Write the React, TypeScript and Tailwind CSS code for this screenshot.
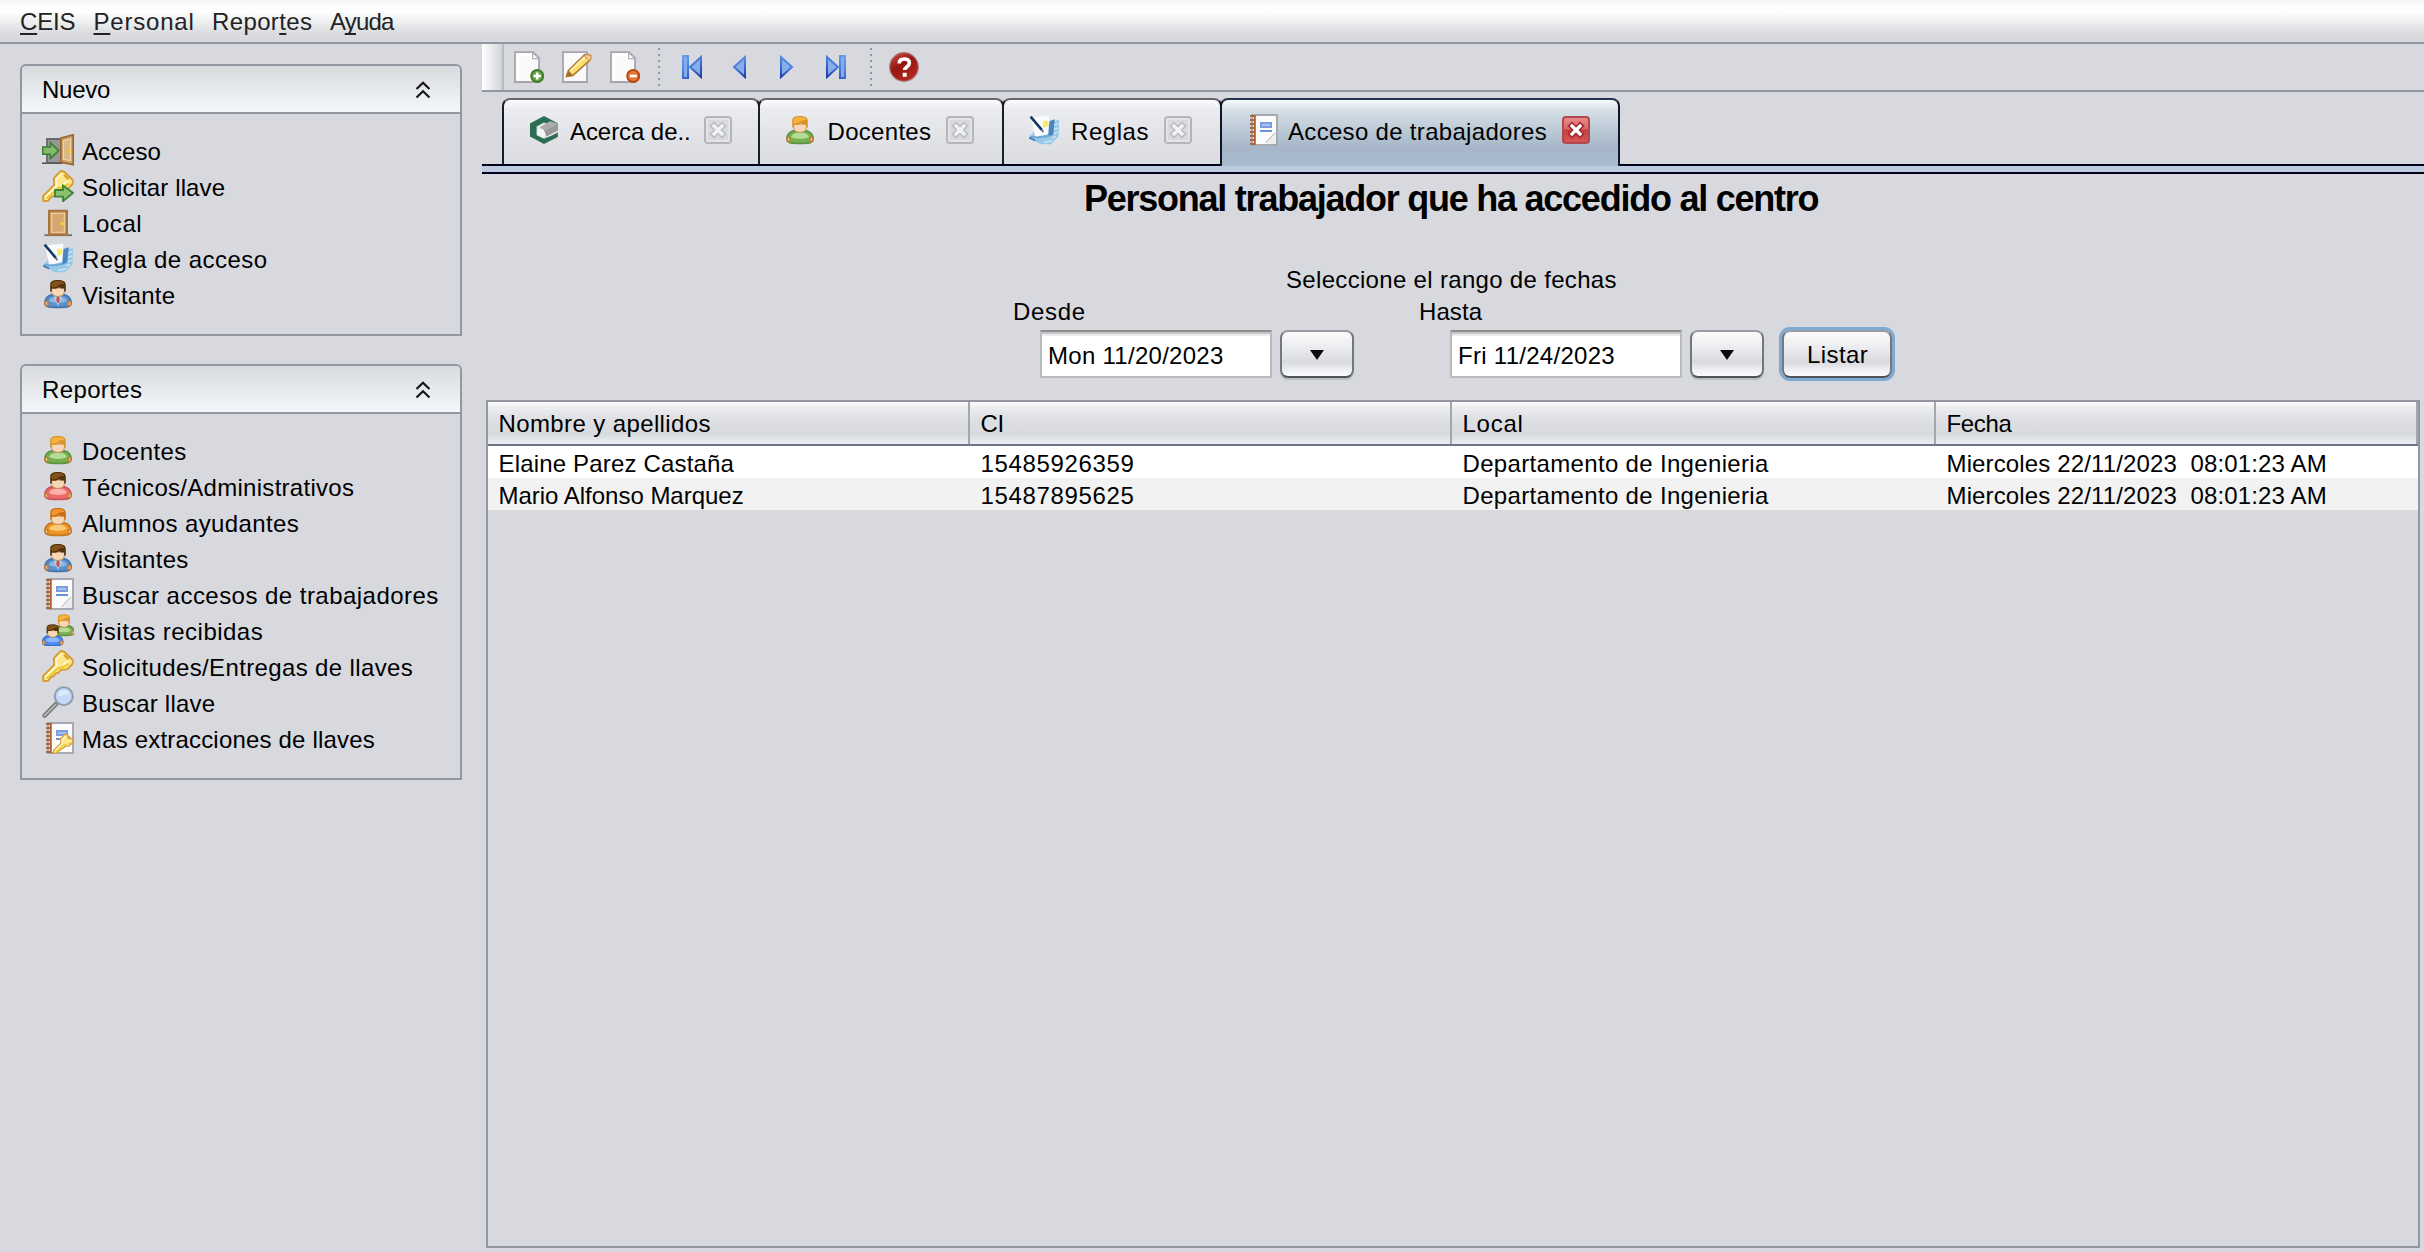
import { useLayoutEffect, useRef, type ReactNode } from 'react';

/* Label whose tracking is adjusted so that its glyphs span exactly `w` pixels. */
function T({ w, children, className = '' }: { w: number; children: ReactNode; className?: string }) {
  const ref = useRef<HTMLSpanElement>(null);
  useLayoutEffect(() => {
    const el = ref.current;
    if (!el) return;
    const ctx = document.createElement('canvas').getContext('2d');
    if (!ctx) return;
    const cs = getComputedStyle(el);
    ctx.font = `${cs.fontWeight} ${cs.fontSize} "Liberation Sans"`;
    const text = el.textContent ?? '';
    const m = ctx.measureText(text);
    const ink = m.actualBoundingBoxLeft + m.actualBoundingBoxRight;
    el.style.letterSpacing = `${(w - ink) / Math.max(1, text.length - 1)}px`;
    el.style.textIndent = `${m.actualBoundingBoxLeft}px`;
    el.style.width = `${w}px`;
  }, [w]);
  return (
    <span ref={ref} className={`block shrink-0 whitespace-pre ${className}`}>
      {children}
    </span>
  );
}

function U({ children }: { children: ReactNode }) {
  return (
    <span className="underline decoration-2 underline-offset-[3px] [text-decoration-skip-ink:none]">{children}</span>
  );
}

function Icon({ children, className = '' }: { children: ReactNode; className?: string }) {
  return (
    <svg viewBox="0 0 16 16" className={`block size-8 shrink-0 ${className}`} fill="none">
      {children}
    </svg>
  );
}

type Tone = 'green' | 'red' | 'orange' | 'blue' | 'azure';
const tones: Record<Tone, { edge: string; a: string; b: string }> = {
  green: { edge: '#5c9440', a: '#b4dc94', b: '#74b050' },
  red: { edge: '#cc5058', a: '#fcb0ac', b: '#ec6c6c' },
  orange: { edge: '#c87820', a: '#fcc870', b: '#ec9428' },
  blue: { edge: '#4474ac', a: '#8cb8e4', b: '#5c90cc' },
  azure: { edge: '#3c70c8', a: '#8cb8fc', b: '#4c8cf4' },
};
const hairs = {
  blond: ['#f4b440', '#dc9428'],
  brown: ['#84501c', '#54300c'],
  ginger: ['#f09430', '#d06c10'],
};

function Figure({ tone, hair }: { tone: Tone; hair: keyof typeof hairs }) {
  const t = tones[tone];
  const h = hairs[hair];
  return (
    <>
      <path d="M1.500 12.600c0-2.600 1.600-3.900 3.700-4.300l2.800.9 2.800-.9c2.100.4 3.700 1.700 3.700 4.300 0 .9-.4 1.300-1.200 1.600-1.500.6-9.100.6-10.600 0-.8-.3-1.200-.7-1.200-1.600z" fill={t.b} stroke={t.edge} strokeWidth=".9" />
      <path d="M3.500 11.500c.8-1.700 2.200-2.300 4.500-2.100 2.300-.2 3.700.4 4.500 2.100-2.500 1.300-6.500 1.300-9 0z" fill={t.a} />
      <path d="M1.400 11.800h1.500v2.200l-1.100-.3zM14.600 11.800h-1.500v2.200l1.100-.3z" fill="#f4c48c" stroke="#c47c34" strokeWidth=".6" />
      {tone === 'blue' && (
        <>
          <path d="M6.300 8.800 8 10.200l1.700-1.400v1.600L8 14l-1.700-3.500z" fill="#b4d0ec" />
          <path d="m8 9 .9 1.200L8.600 12 8 12.700 7.400 12l-.3-1.800z" fill="#d44840" />
        </>
      )}
      <path d="M4.800 5h6.400v1.700c0 1.600-1.400 2.500-3.200 2.500S4.800 8.300 4.800 6.700z" fill="#f8d8b4" stroke="#c08c5c" strokeWidth=".5" />
      <path d="M4.100 6.800V3.200C4.100 1.700 5.500 1 8 1s3.900.8 3.900 2.400v3.400h-.8V5.100c-1 .3-1.900.1-2.500-.5C7.500 5.300 6.200 5.500 4.900 5.200v1.600z" fill={h[1]} />
      <path d="M4.700 4.500V3c.3-1.100 1.400-1.500 3.300-1.500s3 .5 3.200 1.500c-1.600.2-2.400 0-3 .8-.9.800-2 .9-3.500.7z" fill={h[0]} />
    </>
  );
}

const Person = ({ tone, hair }: { tone: Tone; hair: keyof typeof hairs }) => (
  <Icon>
    <Figure tone={tone} hair={hair} />
  </Icon>
);

const PeopleIcon = () => (
  <Icon>
    <g transform="translate(4.700 -.6) scale(.78)">
      <Figure tone="green" hair="blond" />
    </g>
    <g transform="translate(-.9 4.400) scale(.78)">
      <Figure tone="azure" hair="brown" />
    </g>
  </Icon>
);

const DoorInIcon = () => (
  <Icon>
    <path d="M2.500 2.500H10v12H2.500z" fill="#989898" stroke="#686868" strokeWidth=".9" />
    <path d="M0 14.600h9" stroke="#585858" strokeWidth=".8" />
    <path d="M9.400 2 15.600.4v15L9.400 14z" fill="#cc9c64" stroke="#986430" strokeWidth=".8" />
    <path d="M10.700 3.300 14.300 2.400v11l-3.600-.8z" fill="#dcb884" stroke="#ecd4ac" strokeWidth=".6" />
    <path d="M13.200 8h1.500v1.500h-1.500z" fill="#fccc34" />
    <path d="M.3 6.500h3.900V4.300L8.300 8.300l-4.100 4v-2.200H.3z" fill="#84bc6c" stroke="#3c7c34" strokeWidth=".8" />
  </Icon>
);

const keyBody = (
  <>
    <path d="M5.900 4.200 9 .8q1-.6 2 .1l4.300 4q.5 1-.3 2.500l-2.500 2.300-3 .2L8 11.500l-1.500.3L6 13l-1.400.4L3 15.400l-2.400.1V13l5.500-5.500z" fill="#fce888" stroke="#d89c34" strokeWidth=".95" strokeLinejoin="round" />
    <path d="M9.700 2 7.100 4.800l.3 2.900-5.600 5.600M10.300 7.400l3-2.200" stroke="#fffad0" strokeWidth=".8" />
    <path d="m2.400 14.300 5.700-5.200 2.600-.6 2.600-1.600" stroke="#ecc838" strokeWidth="1" />
    <path d="m11 2.500 2.300 2.100" stroke="#d89c34" strokeWidth="1" />
  </>
);
const KeyIcon = () => <Icon>{keyBody}</Icon>;
const KeyGoIcon = () => (
  <Icon>
    {keyBody}
    <path d="M6.500 10h4V7.800l5 3.700-5 4.100v-2.300h-4z" fill="#8cc070" stroke="#3c8434" strokeWidth=".9" />
  </Icon>
);

const DoorIcon = () => (
  <Icon>
    <path d="M1.200 14.600h13.800" stroke="#707070" strokeWidth=".9" />
    <path d="M3.500 2.400h9v12h-9z" fill="#c89458" stroke="#a87440" />
    <path d="M4.800 3.700h6.400v9.500H4.800z" fill="#d4a870" stroke="#e8cca0" strokeWidth=".7" />
    <path d="M9.300 8h1.700v1.600H9.300z" fill="#fccc34" />
  </Icon>
);

const RulesIcon = () => (
  <Icon>
    <path d="m.6 12 3-4 7-3.500 5-1.800-.4 8.500-3.800 4-5.200-.2z" fill="#98c8e8" />
    <path d="m10.800 3.500 2.600-.9-.8 7.800-2.600 1z" fill="#4c84bc" />
    <path d="m13.200 5.500 2-.8M13 7.700l2-.8M12.800 9.900l2-.8M12 12l2-.8M8 14.200l4-.8" stroke="#d0e8f8" strokeWidth=".7" />
    <path d="M1.500 1.800 10.700.8l-.6 9.200-6.500 1.600z" fill="#f8fafc" />
    <path d="m1 11.200 3.500.6 6-.8" stroke="#70a8d4" strokeWidth="1" />
    <path d="M7.500 3.400h2.600V6L7.500 7z" fill="#f8ec60" />
    <path d="m1.300 1.300 5.600 6.600" stroke="#143868" strokeWidth="1.300" />
    <path d="m6.900 7.900.7 1.200" stroke="#5c6c80" strokeWidth=".9" />
    <path d="m.6 11.900 3 1.400" stroke="#3474ac" strokeWidth=".8" />
  </Icon>
);

const notebookBody = (
  <>
    <path d="M3 .5h12.500v15H3z" fill="#fcfcfc" stroke="#a8a8b0" />
    <path d="M4.400.5v15" stroke="#b45c2c" strokeWidth="1" />
    <path d="M2 1h2M2 3h2M2 5h2M2 7h2M2 9h2M2 11h2M2 13h2M2 15h2" stroke="#a8683c" strokeWidth=".9" />
    <path d="M7.500 4.500h5v2h-5z" fill="#a8c0f0" stroke="#7c9ce0" />
    <path d="M7 8.500h6" stroke="#6c90dc" />
  </>
);
const NotebookIcon = () => (
  <Icon>
    {notebookBody}
    <path d="M10 15c2-.8 1.800-2 1.900-2.800 1.300 0 2.400-.7 3.100-2.700V15z" fill="#ececee" />
    <path d="m9.800 14.500 4.700-5" stroke="#c8c8cc" strokeWidth=".7" />
  </Icon>
);
const NotebookKeyIcon = () => (
  <Icon>
    {notebookBody}
    <g transform="translate(5.500 5.800) scale(.64)">{keyBody}</g>
  </Icon>
);

const MagnifierIcon = () => (
  <Icon>
    <path d="m1.300 14.800 5.900-6" stroke="#787878" strokeWidth="2.200" strokeLinecap="round" />
    <path d="m1.300 14.800 5.600-5.600" stroke="#b8b8b8" strokeWidth=".8" strokeLinecap="round" />
    <circle cx="10.900" cy="5.100" r="4.500" fill="#c4daf8" stroke="#8e9cb0" strokeWidth="1" />
    <path d="M8 5.200a3 3 0 0 1 5.700-1.300z" fill="#dceafa" />
  </Icon>
);

const sheet = (
  <>
    <path d="M1.500.6h9l3 3v11.900h-12z" fill="#fafafa" stroke="#a4a6ac" strokeWidth=".9" />
    <path d="M3 14V2h6.500" stroke="#fff" />
    <path d="M10.300.8v3h3z" fill="#fff" stroke="#b0b2b8" strokeWidth=".6" />
  </>
);
const AddIcon = () => (
  <Icon>
    {sheet}
    <circle cx="12.600" cy="12.500" r="3" fill="#68a848" stroke="#447c2c" />
    <path d="M12.600 10.700v3.600M10.800 12.500h3.600" stroke="#fff" strokeWidth="1.200" />
  </Icon>
);
const EditIcon = () => (
  <Icon>
    <path d="M1.500.6h12v14.900h-12z" fill="#fafafa" stroke="#a4a6ac" strokeWidth=".9" />
    <path d="M12.400 1.800 4.200 9.700l-1 3 3.300-.5L15 4.600V2.300z" fill="#fcdc6c" stroke="#b08038" strokeWidth=".8" />
    <path d="m5.300 9.800 7.500-7.200" stroke="#fff4b0" />
    <path d="m12 2.300 2.600 2.600.9-1V2.100L13 1.800z" fill="#f8c898" stroke="#c08040" strokeWidth=".5" />
    <path d="m4.300 9.800-1.300 3 3.500-.6z" fill="#a86c30" />
  </Icon>
);
const RemoveIcon = () => (
  <Icon>
    {sheet}
    <circle cx="12.600" cy="12.500" r="3" fill="#ec7434" stroke="#b44c14" />
    <path d="M10.900 12.500h3.500" stroke="#fff" strokeWidth="1.300" />
  </Icon>
);

function NavIcon({ bar, flip = false, className }: { bar: boolean; flip?: boolean; className: string }) {
  const w = bar ? 20 : 14;
  const id = `nav${w}${flip ? 'f' : ''}`;
  const tri = bar ? 'M19 2v20L8 12z' : 'M13 2v20L2 12z';
  return (
    <svg viewBox={`0 0 ${w} 24`} fill="none" className={`block h-6 shrink-0 ${className}`}>
      <defs>
        <linearGradient id={id} gradientUnits="userSpaceOnUse" x1="0" y1="0" x2={w} y2="24">
          <stop offset="0" stopColor="#6ca4f0" />
          <stop offset=".5" stopColor="#4478d8" />
          <stop offset="1" stopColor="#1830a8" />
        </linearGradient>
      </defs>
      <g transform={flip ? `translate(${w} 0) scale(-1 1)` : undefined} stroke={`url(#${id})`} strokeWidth="2">
        {bar && <path d="M1 1h5v22H1z" fill="#84acec" />}
        <path d={tri} fill="#88aee8" />
      </g>
    </svg>
  );
}

const HelpIcon = ({ className }: { className: string }) => (
  <svg viewBox="0 0 32 32" className={`block size-8 shrink-0 ${className}`}>
    <defs>
      <linearGradient id="help" x1="0" y1="0" x2="0.600" y2="1">
        <stop offset="0" stopColor="#d05048" />
        <stop offset=".5" stopColor="#941810" />
        <stop offset="1" stopColor="#b42820" />
      </linearGradient>
    </defs>
    <circle cx="16" cy="16" r="14.300" fill="url(#help)" stroke="#b07878" strokeWidth="1.200" />
    <path d="M11.200 12.500c0-3 2-4.500 5-4.500 3.100 0 5.200 1.500 5.200 4.100 0 3.700-4.700 3.500-4.700 7" fill="none" stroke="#fff" strokeWidth="3.600" />
    <path d="M14.700 21.800h4v4h-4z" fill="#fff" />
  </svg>
);

const HexIcon = () => (
  <Icon>
    <path d="M8 1 15 4.800l-2.400 1.500L8 4.300 4.300 6.300v4.300L8 12.400l4-1.700 2.900-1.500v2.300L8 15 1 11.300V4.700z" fill="#2c6c50" />
    <path d="m5 7.400 3 .6.800 2.800-1.500 1.200L4.700 10z" fill="#f4f4f4" />
    <path d="M6 6.700 11 3.600 15 5v3.200l-5.800 3-1.300-3.400z" fill="#989898" />
    <path d="M6 6.700 11 3.600 15 5 8.800 8.200z" fill="#acacac" />
  </Icon>
);

function Close({ active = false, className = '' }: { active?: boolean; className?: string }) {
  return (
    <svg viewBox="0 0 28 28" className={`block size-7 shrink-0 ${className}`} fill="none">
      <defs>
        <linearGradient id="closeOn" x1="0" y1="0" x2="0" y2="1">
          <stop offset="0" stopColor="#ec8c8c" />
          <stop offset=".45" stopColor="#dc6868" />
          <stop offset=".5" stopColor="#c83c3c" />
          <stop offset="1" stopColor="#d85858" />
        </linearGradient>
      </defs>
      <rect x="1" y="1" width="26" height="26" rx="3" fill={active ? 'url(#closeOn)' : '#d8dadd'} stroke={active ? '#b04850' : '#b4b6ba'} strokeWidth="2" />
      {!active && <rect x="3" y="3" width="22" height="22" rx="1" stroke="#e2e4e7" strokeWidth="2" />}
      <path d="m10 10 8 8M18 10l-8 8" stroke={active ? '#a02c34' : '#bcbec2'} strokeWidth="6.500" strokeLinecap="square" />
      <path d="m10 10 8 8M18 10l-8 8" stroke={active ? '#fff' : '#f2f3f4'} strokeWidth="3.200" strokeLinecap="square" />
    </svg>
  );
}

function Panel({ title, w, children }: { title: string; w: number; children: ReactNode }) {
  return (
    <section className="w-[442px] rounded-t-md border-2 border-[#9297a1]">
      <header className="flex h-12 items-center justify-between rounded-t border-b-2 border-[#9297a1] bg-gradient-to-b from-[#d8dade] to-[#f5f8fa] pl-[21px] pr-[29px] pt-px">
        <T w={w}>{title}</T>
        <svg viewBox="0 0 16 18" className="block h-[18px] w-4" fill="none" stroke="#161616" strokeWidth="2.200">
          <path d="m1.500 8 6.500-6.300L14.500 8M1.500 16.500 8 10.200l6.500 6.300" />
        </svg>
      </header>
      <div className="pb-[22px] pl-5 pt-[18px]">{children}</div>
    </section>
  );
}

function Item({ icon, w, children }: { icon: ReactNode; w: number; children: string }) {
  return (
    <div className="flex h-9 items-center">
      {icon}
      <T w={w} className={/^[ATV]/.test(children) ? 'ml-2 pt-1' : 'ml-[9px] pt-1'}>
        {children}
      </T>
    </div>
  );
}

const tabIdle =
  'flex h-[66px] items-start rounded-t-lg border-2 border-b-0 border-[#1c1c30] border-t-[#67686e] bg-[linear-gradient(180deg,#fcfcfd_0,#ebecef_9px,#e0e2e6_40px,#dadce0_100%)]';

function DateField({ w, children }: { w: number; children: string }) {
  return (
    <div className="h-12 w-[232px] border-2 border-[#b9babb] border-t-[#8c8d8f] bg-[linear-gradient(180deg,#c6c6c6_0,#c6c6c6_2px,#ebebeb_2px,#ebebeb_4px,#fff_4px)] pl-[7px] pt-[10px]">
      <T w={w} className="leading-7">{children}</T>
    </div>
  );
}

const buttonLook =
  'h-12 rounded-lg border-2 border-[#74777d] border-t-[#989ca2] border-b-[#505257] bg-[linear-gradient(180deg,#fbfbfc_0,#e9eaed_40%,#d8dade_68%,#eceef1_85%,#fbfcfd_100%)]';

function DropButton() {
  return (
    <button className={`${buttonLook} ml-2 flex w-[74px] items-center justify-center pt-px shadow-[0_2px_1px_rgba(110,115,125,0.3)]`}>
      <svg viewBox="0 0 14 10" className="block h-[10px] w-[14px]">
        <path d="M0 0h14L7 10z" fill="#0a0a0a" />
      </svg>
    </button>
  );
}

const columns = [
  { title: 'Nombre y apellidos', w: 211, size: 'w-[482px]' },
  { title: 'CI', w: 21, size: 'w-[482px]' },
  { title: 'Local', w: 58, size: 'w-[484px]' },
  { title: 'Fecha', w: 65, size: 'w-[482px]' },
];
const rows = [
  [['Elaine Parez Castaña', 235], ['15485926359', 152], ['Departamento de Ingenieria', 305.5], ['Miercoles 22/11/2023  08:01:23 AM', 379.5]],
  [['Mario Alfonso Marquez', 244.5], ['15487895625', 152], ['Departamento de Ingenieria', 305.5], ['Miercoles 22/11/2023  08:01:23 AM', 379.5]],
] as [string, number][][];

export default function App() {
  return (
    <div className="flex h-[1252px] w-[2424px] flex-col overflow-hidden bg-[#d7d9de] font-['Liberation_Sans',Arial,sans-serif] text-[24px] leading-7 text-black">
      <nav className="flex h-11 shrink-0 border-b-2 border-[#9297a1] bg-[linear-gradient(180deg,#f6f6f7_0,#fefefe_7px,#fefefe_12px,#d9dbdf_34px,#d7d9de_100%)] pl-[21px] pt-2 text-[#232324]">
        <T w={53.500}><U>C</U>EIS</T>
        <T w={98} className="ml-5"><U>P</U>ersonal</T>
        <T w={99} className="ml-[20.500px]">Repor<U>t</U>es</T>
        <T w={65} className="ml-[18px]">A<U>y</U>uda</T>
      </nav>
      <div className="flex min-h-0 flex-1">
        <aside className="flex w-[482px] shrink-0 flex-col gap-7 pl-5 pt-5">
          <Panel title="Nuevo" w={67}>
            <Item icon={<DoorInIcon />} w={78.500}>Acceso</Item>
            <Item icon={<KeyGoIcon />} w={141.700}>Solicitar llave</Item>
            <Item icon={<DoorIcon />} w={57.300}>Local</Item>
            <Item icon={<RulesIcon />} w={183.700}>Regla de acceso</Item>
            <Item icon={<Person tone="blue" hair="brown" />} w={92.700}>Visitante</Item>
          </Panel>
          <Panel title="Reportes" w={99}>
            <Item icon={<Person tone="green" hair="blond" />} w={103.300}>Docentes</Item>
            <Item icon={<Person tone="red" hair="brown" />} w={272}>Técnicos/Administrativos</Item>
            <Item icon={<Person tone="orange" hair="ginger" />} w={216.700}>Alumnos ayudantes</Item>
            <Item icon={<Person tone="blue" hair="brown" />} w={106.300}>Visitantes</Item>
            <Item icon={<NotebookIcon />} w={355.300}>Buscar accesos de trabajadores</Item>
            <Item icon={<PeopleIcon />} w={180.700}>Visitas recibidas</Item>
            <Item icon={<KeyIcon />} w={329.700}>Solicitudes/Entregas de llaves</Item>
            <Item icon={<MagnifierIcon />} w={131.700}>Buscar llave</Item>
            <Item icon={<NotebookKeyIcon />} w={291.700}>Mas extracciones de llaves</Item>
          </Panel>
        </aside>
        <main className="flex min-w-0 flex-1 flex-col">
          <div className="flex h-12 shrink-0 items-center border-b-2 border-[#9297a1]">
            <div className="h-full w-[22px] border-r-2 border-[#b9bcc2] bg-gradient-to-r from-white to-[#d2d4d9]" />
            <div className="ml-2 flex gap-4">
              <AddIcon />
              <EditIcon />
              <RemoveIcon />
            </div>
            <div className="ml-[18px] h-[38px] w-0.5 bg-[repeating-linear-gradient(180deg,#9297a1_0,#9297a1_2px,transparent_2px,transparent_6px)]" />
            <NavIcon bar className="ml-[22px] w-5" />
            <NavIcon bar={false} className="ml-[30px] w-[14px]" />
            <NavIcon bar={false} flip className="ml-[34px] w-[14px]" />
            <NavIcon bar flip className="ml-8 w-5" />
            <div className="ml-6 h-[38px] w-0.5 bg-[repeating-linear-gradient(180deg,#9297a1_0,#9297a1_2px,transparent_2px,transparent_6px)]" />
            <HelpIcon className="ml-4" />
          </div>
          <div className="h-[82px] shrink-0 bg-[linear-gradient(180deg,transparent_72px,#00001a_72px,#00001a_74px,#bccbe0_74px,#bccbe0_80px,#00001a_80px)] pl-5 pt-1.5">
            <div className="flex items-start">
              <div className={`${tabIdle} w-[258px] pl-6`}>
                <div className="mt-[14px]"><HexIcon /></div>
                <T w={119} className="ml-[10px] mt-[18px]">Acerca de..</T>
                <Close className="ml-[15px] mt-4" />
              </div>
              <div className={`${tabIdle} -ml-0.5 w-[246px] pl-6`}>
                <div className="mt-[14px]"><Person tone="green" hair="blond" /></div>
                <T w={102.500} className="ml-[12.500px] mt-[18px]">Docentes</T>
                <Close className="ml-[15px] mt-4" />
              </div>
              <div className={`${tabIdle} -ml-0.5 w-[220px] pl-6`}>
                <div className="mt-[14px]"><RulesIcon /></div>
                <T w={76.500} className="ml-3 mt-[18px]">Reglas</T>
                <Close className="ml-[15.500px] mt-4" />
              </div>
              <div className="-ml-0.5 flex h-[68px] w-[400px] items-start rounded-t-lg border-2 border-b-0 border-[#10142c] border-t-[#22344c] bg-[linear-gradient(180deg,#f8fafb_0,#d6dfe6_10px,#bccad6_30px,#a6b6c8_48px,#acbcd0_100%)] pl-6">
                <div className="mt-[14px]"><NotebookIcon /></div>
                <T w={258.700} className="ml-[10px] mt-[18px]">Acceso de trabajadores</T>
                <Close active className="ml-[15.300px] mt-4" />
              </div>
            </div>
          </div>
          <div className="flex h-[226px] shrink-0 flex-col">
            <h1 className="pl-[604px] pt-[4px] text-[36px] font-bold leading-[42px]">
              <T w={732.500}>Personal trabajador que ha accedido al centro</T>
            </h1>
            <div className="pl-[805px] pt-[46px]">
              <T w={329.500}>Seleccione el rango de fechas</T>
            </div>
            <div className="flex pl-[532px] pt-1">
              <T w={70.700}>Desde</T>
              <T w={62.700} className="ml-[335.300px]">Hasta</T>
            </div>
            <div className="flex pl-[558px] pt-1">
              <DateField w={174}>Mon 11/20/2023</DateField>
              <DropButton />
              <div className="ml-24 flex">
                <DateField w={155.300}>Fri 11/24/2023</DateField>
                <DropButton />
              </div>
              <button className={`${buttonLook} ml-[18px] w-[110px] pl-6 text-left shadow-[0_0_0_3px_#7fa9d3]`}>
                <T w={59.700} className="pt-[2px]">Listar</T>
              </button>
            </div>
          </div>
          <div className="ml-1 h-[848px] w-[1934px] shrink-0 border-2 border-[#9297a1]">
            <div className="flex h-11 border-b-2 border-[#717782] bg-[linear-gradient(180deg,#fcfcfd_0,#ecedf0_6px,#dee0e4_16px,#d8dade_32px,#ebeff3_42px)]">
              {columns.map((c) => (
                <div key={c.title} className={`${c.size} shrink-0 border-r-2 border-[#a3a6ac] pl-[11.500px] pt-2`}>
                  <T w={c.w}>{c.title}</T>
                </div>
              ))}
            </div>
            {rows.map((r, i) => (
              <div key={i} className={`flex h-8 ${i % 2 ? 'bg-[#f2f2f2]' : 'bg-white'}`}>
                {r.map(([text, w], j) => (
                  <div key={j} className={`${columns[j].size} shrink-0 pl-[11.500px] pt-1`}>
                    <T w={w}>{text}</T>
                  </div>
                ))}
              </div>
            ))}
          </div>
        </main>
      </div>
    </div>
  );
}
